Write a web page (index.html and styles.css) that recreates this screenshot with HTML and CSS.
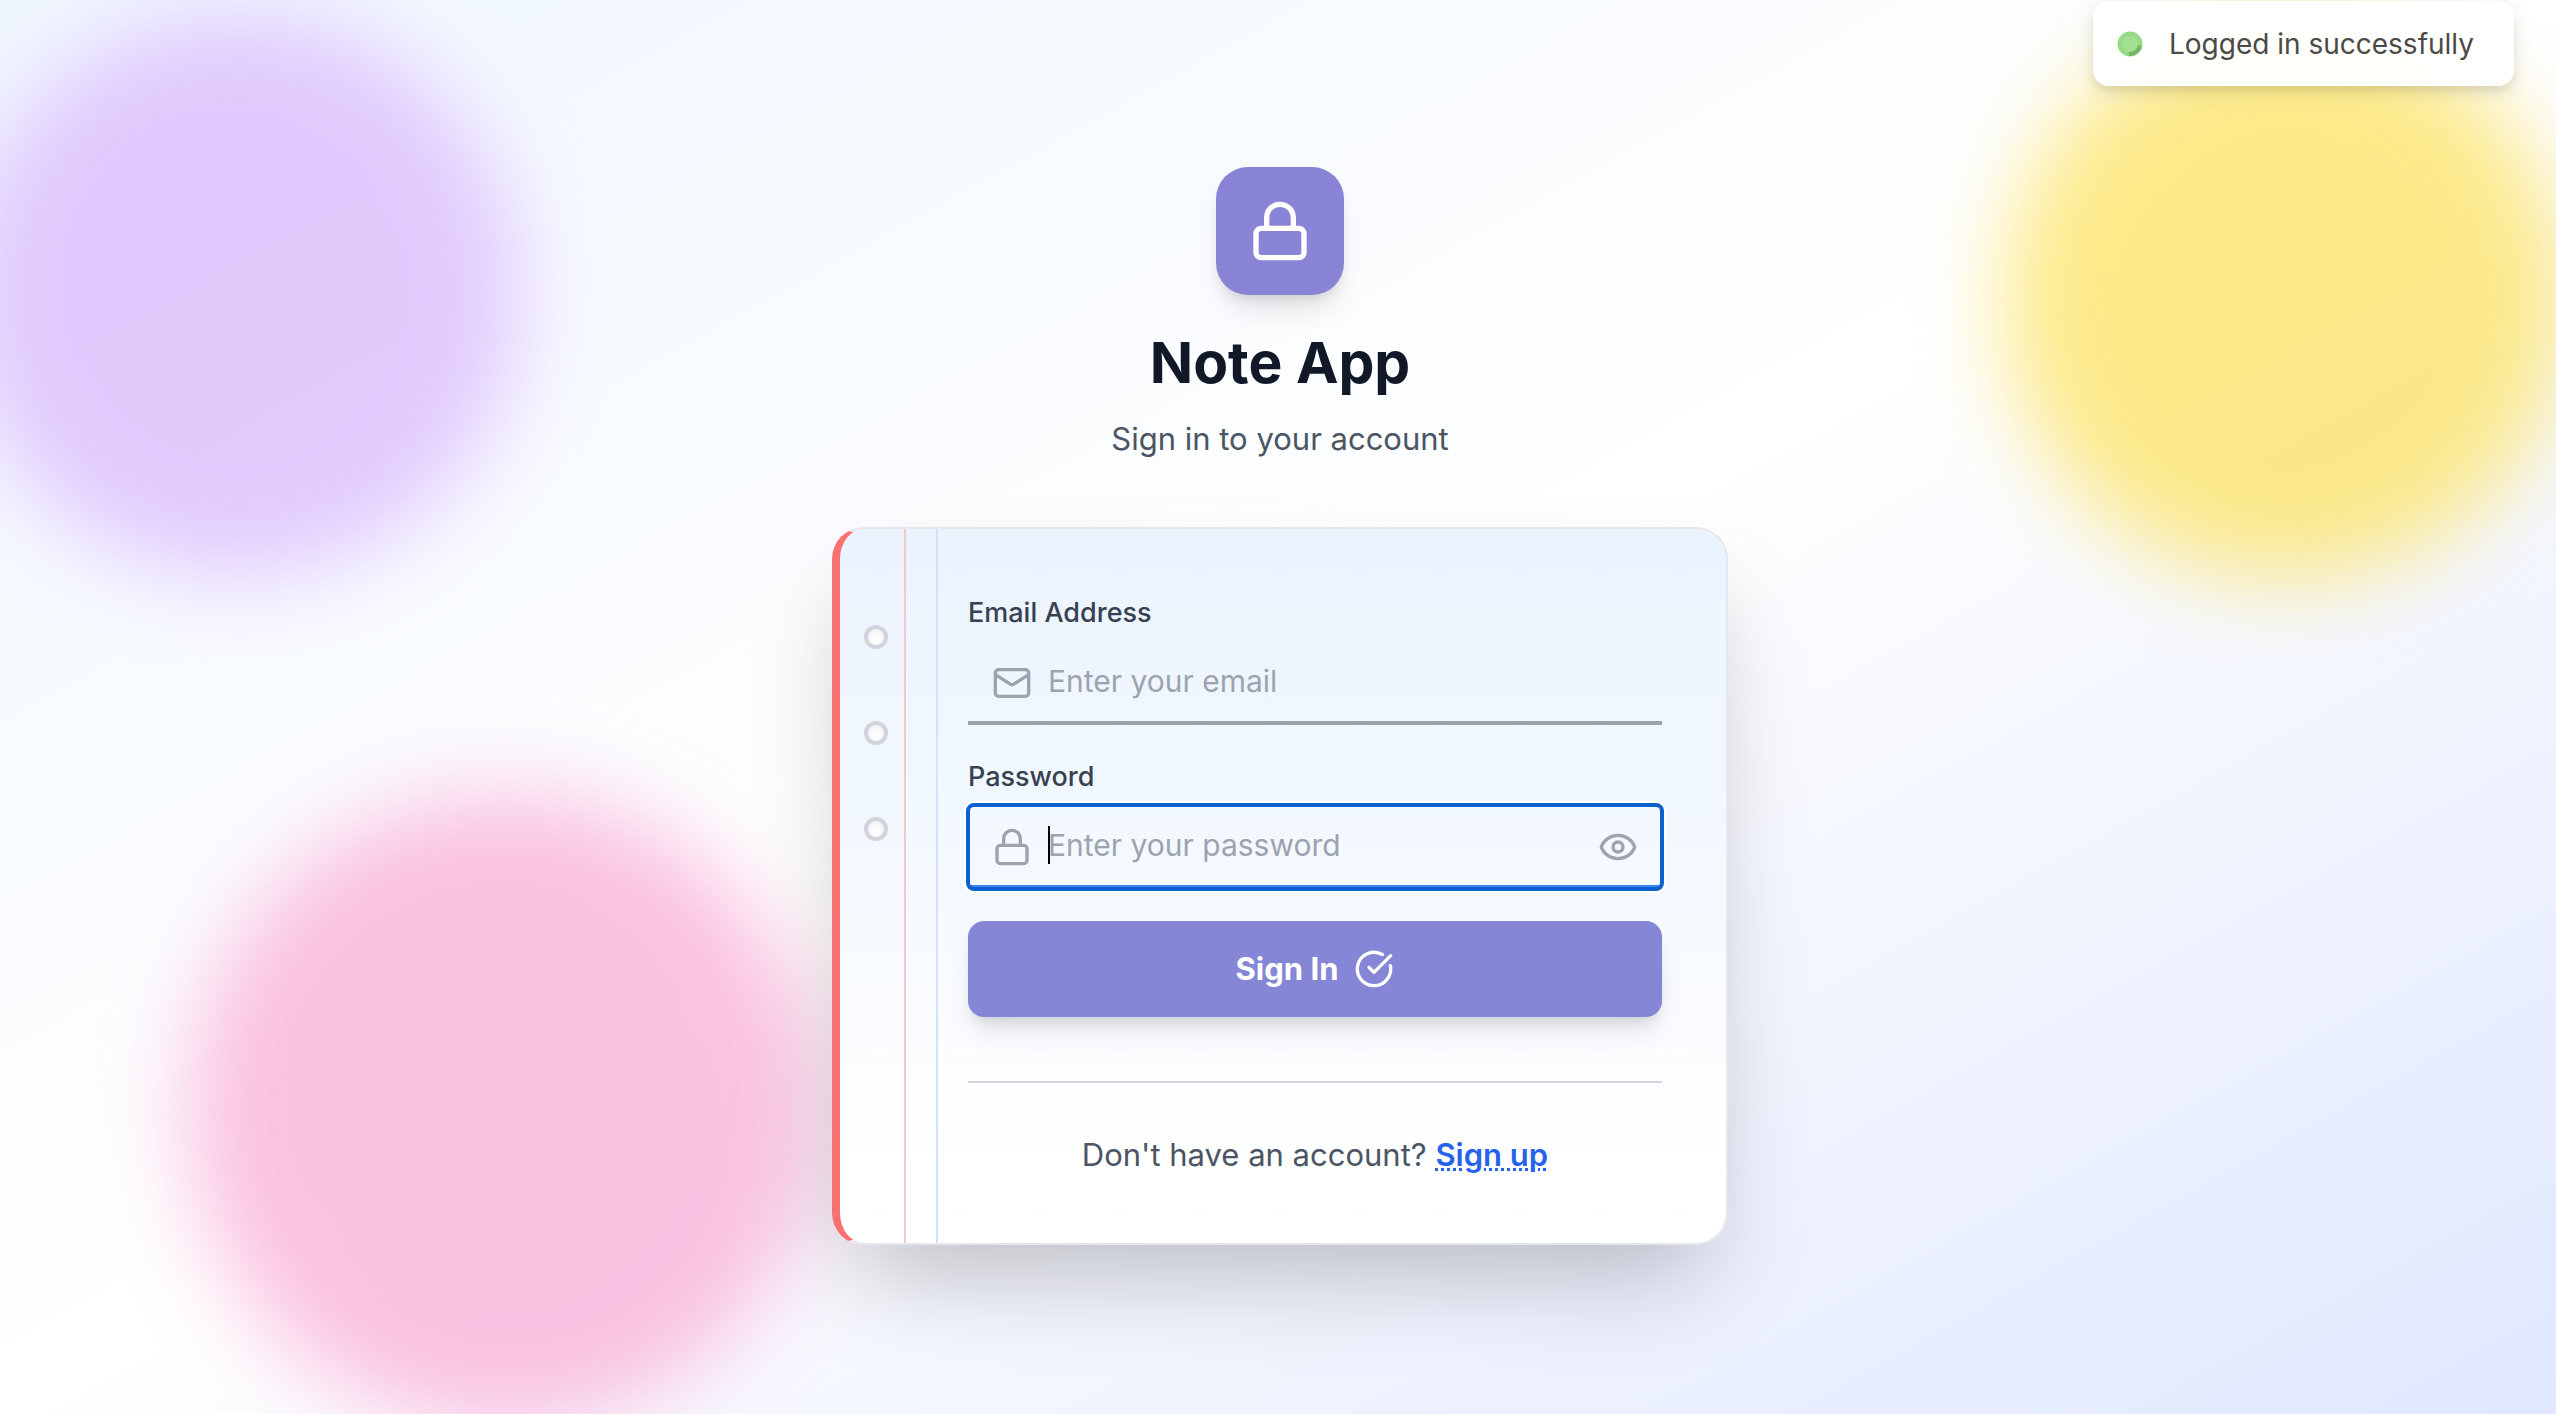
FILE: index.html
```html
<!DOCTYPE html>
<html lang="en">
<head>
  <meta charset="utf-8">
  <meta name="viewport" content="width=device-width, initial-scale=1">
  <title>Note App</title>
  <link rel="stylesheet" href="styles.css">
</head>
<body>
  <div class="blobs" aria-hidden="true">
    <div class="blob blob-purple"></div>
    <div class="blob blob-yellow"></div>
    <div class="blob blob-pink"></div>
  </div>

  <div class="toast" role="status">
    <svg class="toast-icon" viewBox="0 0 26 26" aria-hidden="true">
      <circle cx="13" cy="13" r="12.5" fill="#98da86"/>
      <circle cx="13" cy="13" r="8" fill="#a0e090"/>
      <path d="M22.8 14.5A10 10 0 0 1 12 22.9" fill="none" stroke="#74b463" stroke-width="4"/>
    </svg>
    <span>Logged in successfully</span>
  </div>

  <main class="page">
    <header class="intro">
      <div class="logo">
        <svg class="icon icon-large" viewBox="0 0 24 24" aria-hidden="true">
          <rect x="3" y="11" width="18" height="11" rx="2"/>
          <path d="M7 11V7a5 5 0 0 1 10 0v4"/>
        </svg>
      </div>
      <h1 class="title">Note App</h1>
      <p class="subtitle">Sign in to your account</p>
    </header>

    <section class="card">
      <span class="margin-line margin-red"></span>
      <span class="margin-line margin-blue"></span>
      <div class="holes" aria-hidden="true">
        <span class="hole"></span>
        <span class="hole"></span>
        <span class="hole"></span>
      </div>

      <form class="form">
        <div class="field">
          <label class="label" for="email">Email Address</label>
          <div class="control">
            <svg class="icon control-icon" viewBox="0 0 24 24" aria-hidden="true">
              <rect x="2" y="4" width="20" height="16" rx="2"/>
              <path d="m22 7-8.97 5.7a1.94 1.94 0 0 1-2.06 0L2 7"/>
            </svg>
            <input class="input" id="email" type="email" placeholder="Enter your email">
          </div>
        </div>

        <div class="field">
          <label class="label" for="password">Password</label>
          <div class="control">
            <svg class="icon control-icon" viewBox="0 0 24 24" aria-hidden="true">
              <rect x="3" y="11" width="18" height="11" rx="2"/>
              <path d="M7 11V7a5 5 0 0 1 10 0v4"/>
            </svg>
            <input class="input is-focused" id="password" type="password" placeholder="Enter your password">
            <span class="caret" aria-hidden="true"></span>
            <button class="reveal" type="button" aria-label="Show password">
              <svg class="icon" viewBox="0 0 24 24" aria-hidden="true">
                <path d="M2.062 12.348a1 1 0 0 1 0-.696 10.75 10.75 0 0 1 19.876 0 1 1 0 0 1 0 .696 10.75 10.75 0 0 1-19.876 0"/>
                <circle cx="12" cy="12" r="3"/>
              </svg>
            </button>
          </div>
        </div>

        <button class="submit" type="submit">
          <span>Sign In</span>
          <svg class="icon" viewBox="0 0 24 24" aria-hidden="true">
            <path d="M21.801 10A10 10 0 1 1 17 3.335"/>
            <path d="m9 11 3 3L22 4"/>
          </svg>
        </button>
      </form>

      <p class="signup">Don't have an account? <a class="signup-link" href="#signup">Sign up</a></p>
    </section>
  </main>
</body>
</html>
```

FILE: styles.css
```css
*,
*::before,
*::after {
  box-sizing: border-box;
}

body {
  margin: 0;
  min-height: 100vh;
  position: relative;
  overflow: hidden;
  font-family: Inter, "Liberation Sans", sans-serif;
  font-size: 31px;
  line-height: 48px;
  color: #4b5563;
  background: linear-gradient(to bottom right, #eff6ff, #ffffff, #e0e7ff);
}

h1,
p {
  margin: 0;
}

/* Background blobs */
.blobs {
  position: absolute;
  inset: 0;
  overflow: hidden;
}

.blob {
  position: absolute;
  width: 560px;
  height: 560px;
  border-radius: 50%;
  filter: blur(44px);
  opacity: 0.7;
}

.blob-purple {
  top: 16px;
  left: -40px;
  background: #d9b6fc;
}

.blob-yellow {
  top: 20px;
  right: -10px;
  background: #fce156;
}

.blob-pink {
  bottom: -12px;
  left: 188px;
  width: 632px;
  height: 632px;
  background: #f9a8d4;
}

/* Toast */
.toast {
  position: absolute;
  z-index: 2;
  top: 1px;
  right: 42px;
  display: flex;
  align-items: center;
  gap: 26px;
  padding: 19px 40px 18px 24px;
  border-radius: 16px;
  color: #4a4a46;
  background: rgba(255, 255, 255, 0.96);
  box-shadow: 0 6px 20px rgba(0, 0, 0, 0.1), 0 6px 6px rgba(0, 0, 0, 0.05);
  font-size: 28px;
  white-space: nowrap;
}

.toast-icon {
  width: 26px;
  height: 26px;
}

/* Page */
.page {
  position: relative;
  min-height: 100vh;
  display: flex;
  flex-direction: column;
  align-items: center;
  justify-content: center;
  gap: 64px;
  padding: 32px 32px 34px 36px;
}

.intro {
  display: flex;
  flex-direction: column;
  align-items: center;
  text-align: center;
}

.icon {
  display: block;
  width: 40px;
  height: 40px;
  fill: none;
  stroke: currentColor;
  stroke-width: 2;
  stroke-linecap: round;
  stroke-linejoin: round;
}

.icon-large {
  width: 64px;
  height: 64px;
}

.logo {
  padding: 32px;
  margin-bottom: 32px;
  border-radius: 32px;
  color: #ffffff;
  background: #8a84d6;
  box-shadow: 0 20px 30px -6px rgba(0, 0, 0, 0.1), 0 8px 12px -4px rgba(0, 0, 0, 0.1);
}

.title {
  margin-bottom: 16px;
  font-size: 57px;
  line-height: 72px;
  font-weight: 700;
  color: #111827;
}

/* Notebook card */
.card {
  position: relative;
  width: 100%;
  max-width: 896px;
  padding: 64px 64px 64px 128px;
  border: 2px solid #e5e7eb;
  border-left: 8px solid #f87171;
  border-radius: 32px;
  background:
    radial-gradient(circle, rgba(60, 80, 130, 0.02) 2px, transparent 2px) 0 0 / 80px 80px,
    linear-gradient(to bottom, #ebf3ff, #f0f7ff 30%, #f5f9ff 50%, #fafcff 70%, #ffffff 90%);
  background-clip: padding-box;
  box-shadow: 0 50px 100px -24px rgba(0, 0, 0, 0.25);
}

.margin-line {
  position: absolute;
  top: 0;
  bottom: 0;
  width: 2px;
}

.margin-red {
  left: 64px;
  background: #fac5cb;
}

.margin-blue {
  left: 96px;
  background: #cfe3fc;
}

.holes {
  position: absolute;
  top: 96px;
  left: 24px;
  display: flex;
  flex-direction: column;
  gap: 72px;
}

.hole {
  width: 24px;
  height: 24px;
  border: 4px solid #d1d5db;
  border-radius: 50%;
  background: #fcfcfc;
  box-shadow: inset 0 2px 4px rgba(0, 0, 0, 0.06);
}

.form {
  display: flex;
  flex-direction: column;
  gap: 32px;
}

.field {
  display: flex;
  flex-direction: column;
  gap: 8px;
}

.label {
  font-size: 27px;
  line-height: 40px;
  font-weight: 500;
  color: #374151;
}

.control {
  position: relative;
  display: flex;
  color: #9ca3af;
}

.control-icon {
  position: absolute;
  top: 22px;
  left: 24px;
}

.input {
  width: 100%;
  height: 84px;
  padding: 0 80px;
  border: 0;
  border-bottom: 4px solid #9ca3af;
  background: transparent;
  font: inherit;
  font-size: 30px;
  color: #111827;
}

.input::placeholder {
  color: #9ca3af;
  opacity: 1;
}

.input:focus,
.input.is-focused {
  border-bottom-color: #3b82f6;
  border-radius: 6px;
  outline: 4px solid #0b62ce;
  outline-offset: -2px;
  box-shadow: 0 0 0 4px #ffffff;
}

.caret {
  position: absolute;
  top: 21px;
  left: 80px;
  width: 2px;
  height: 38px;
  background: #000000;
}

.reveal {
  position: absolute;
  top: 22px;
  right: 24px;
  padding: 0;
  border: 0;
  color: inherit;
  background: none;
}

.submit {
  display: flex;
  align-items: center;
  justify-content: center;
  gap: 16px;
  padding: 24px;
  border: 0;
  border-radius: 16px;
  font: inherit;
  font-weight: 700;
  color: #ffffff;
  background: #8686d6;
  box-shadow: 0 20px 30px -6px rgba(0, 0, 0, 0.1), 0 8px 12px -4px rgba(0, 0, 0, 0.1);
}

.signup {
  margin-top: 64px;
  padding-top: 48px;
  border-top: 2px solid #d1d5db;
  text-align: center;
}

.signup-link {
  font-weight: 600;
  color: #2563eb;
  text-decoration: underline dotted 3px;
}
```
